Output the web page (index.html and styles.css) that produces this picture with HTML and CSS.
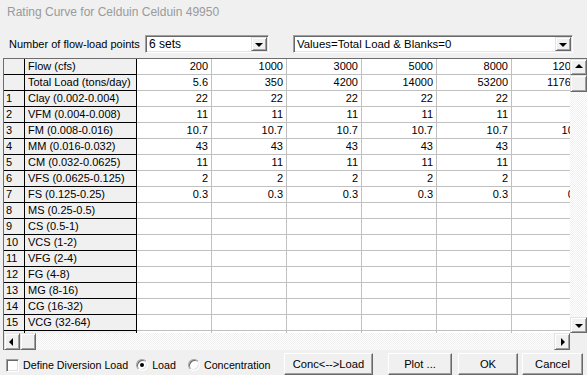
FILE: index.html
```html
<!DOCTYPE html>
<html lang="en">
<head>
    <meta charset="UTF-8">
    <title>Rating Curve</title>
    <link rel="stylesheet" href="styles.css">
</head>
<body>
    <div class="title">Rating Curve for Celduin Celduin 49950</div>

    <div class="toolbar">
        <span class="points-label">Number of flow-load points</span>
        <div class="combo combo-sets">
            <span class="combo-text">6 sets</span>
            <span class="combo-btn"><i class="arrow-down"></i></span>
        </div>
        <div class="combo combo-values">
            <span class="combo-text">Values=Total Load &amp; Blanks=0</span>
            <span class="combo-btn"><i class="arrow-down"></i></span>
        </div>
    </div>

    <div class="grid">
        <div class="grid-main">
            <div class="table-wrap">
                <div class="table" id="table"></div>
            </div>
            <div class="vscroll">
                <span class="sb-btn"><i class="arrow-up"></i></span>
                <span class="sb-thumb"></span>
                <span class="sb-track"></span>
                <span class="sb-btn"><i class="arrow-down"></i></span>
            </div>
        </div>
        <div class="hscroll">
            <span class="sb-btn"><i class="arrow-left"></i></span>
            <span class="sb-thumb"></span>
            <span class="sb-track"></span>
            <span class="sb-btn"><i class="arrow-right"></i></span>
            <span class="sb-corner"></span>
        </div>
    </div>

    <div class="footer">
        <div class="options">
            <span class="check"></span>
            <span class="opt-label">Define Diversion Load</span>
            <span class="radio radio-load on"></span>
            <span class="opt-label">Load</span>
            <span class="radio radio-conc"></span>
            <span class="opt-label">Concentration</span>
        </div>
        <button class="btn btn-conc">Conc&lt;--&gt;Load</button>
        <button class="btn btn-plot">Plot ...</button>
        <button class="btn btn-ok">OK</button>
        <button class="btn btn-cancel">Cancel</button>
    </div>

    <script>
        var rows = [
            ['', 'Flow (cfs)', '200', '1000', '3000', '5000', '8000', '12000'],
            ['', 'Total Load (tons/day)', '5.6', '350', '4200', '14000', '53200', '117600'],
            ['1', 'Clay (0.002-0.004)', '22', '22', '22', '22', '22', '22'],
            ['2', 'VFM (0.004-0.008)', '11', '11', '11', '11', '11', '11'],
            ['3', 'FM (0.008-0.016)', '10.7', '10.7', '10.7', '10.7', '10.7', '10.7'],
            ['4', 'MM (0.016-0.032)', '43', '43', '43', '43', '43', '43'],
            ['5', 'CM (0.032-0.0625)', '11', '11', '11', '11', '11', '11'],
            ['6', 'VFS (0.0625-0.125)', '2', '2', '2', '2', '2', '2'],
            ['7', 'FS (0.125-0.25)', '0.3', '0.3', '0.3', '0.3', '0.3', '0.3'],
            ['8', 'MS (0.25-0.5)'],
            ['9', 'CS (0.5-1)'],
            ['10', 'VCS (1-2)'],
            ['11', 'VFG (2-4)'],
            ['12', 'FG (4-8)'],
            ['13', 'MG (8-16)'],
            ['14', 'CG (16-32)'],
            ['15', 'VCG (32-64)'],
            ['16', 'BLD (64-128)']
        ];

        var table = document.getElementById('table');
        rows.forEach(function(row) {
            for (var i = 0; i < 8; i++) {
                var cell = document.createElement('div');
                cell.className = i < 2 ? 'cell fixed' : 'cell data';
                if (i === 0) cell.className += ' num';
                cell.textContent = row[i] || '';
                table.appendChild(cell);
            }
        });
    </script>
</body>
</html>
```

FILE: styles.css
```css
body {
    margin: 0;
    width: 587px;
    height: 375px;
    overflow: hidden;
    background: #f0f0f0;
    font-family: "Liberation Sans", Arial, sans-serif;
    font-size: 11px;
    color: #000;
}

.title {
    height: 30px;
    padding: 5px 0 0 7px;
    box-sizing: border-box;
    font-size: 12px;
    line-height: 15px;
    color: #9a9a9a;
}

.toolbar {
    display: flex;
    align-items: center;
    height: 18px;
    margin-top: 5px;
    padding-left: 9px;
}
.points-label {
    width: 136px;
}

/* sunken combo boxes */
.combo {
    display: flex;
    align-items: center;
    height: 18px;
    box-sizing: border-box;
    background: #fff;
    border: 1px solid;
    border-color: #a0a0a0 #fff #fff #a0a0a0;
    box-shadow: inset 1px 1px #696969, inset -1px -1px #e3e3e3;
}
.combo-sets {
    width: 124px;
}
.combo-values {
    width: 280px;
    margin-left: 24px;
}
.combo-text {
    flex: 1;
    padding-left: 3px;
    font-size: 12px;
}
.combo-values .combo-text {
    font-size: 11.4px;
}
.combo-btn {
    display: flex;
    align-items: center;
    justify-content: center;
    width: 16px;
    height: 14px;
    margin-right: 1px;
    box-sizing: border-box;
    background: #f0f0f0;
    border: 1px solid;
    border-color: #e3e3e3 #696969 #696969 #e3e3e3;
    box-shadow: inset 1px 1px #fff, inset -1px -1px #a0a0a0;
}

.arrow-down, .arrow-up, .arrow-left, .arrow-right {
    display: block;
    width: 0;
    height: 0;
    border: 4px solid transparent;
}
.arrow-down {
    border-top: 4px solid #000;
    border-bottom-width: 0;
    margin-top: 2px;
}
.arrow-up {
    border-bottom: 4px solid #000;
    border-top-width: 0;
    margin-bottom: 2px;
}
.arrow-left {
    border-right: 4px solid #000;
    border-left-width: 0;
    margin-right: 2px;
}
.arrow-right {
    border-left: 4px solid #000;
    border-right-width: 0;
    margin-left: 2px;
}

/* data grid */
.grid {
    margin: 5px 0 0 3px;
    border-top: 1px solid #6d6d6d;
    border-left: 1px solid #6d6d6d;
    width: 600px;
}
.grid-main {
    display: flex;
}
.table-wrap {
    width: 566px;
    height: 274px;
    overflow: hidden;
    background: #fff;
}
.table {
    display: grid;
    grid-template-columns: 21px 112px repeat(6, 75px);
    grid-auto-rows: 16px;
}
.cell {
    box-sizing: border-box;
    line-height: 15px;
    white-space: nowrap;
    overflow: hidden;
}
.fixed {
    background: #f0f0f0;
    border-right: 1px solid #000;
    border-bottom: 1px solid #000;
    padding-left: 3px;
}
.num {
    padding-left: 2px;
}
.data {
    background: #fff;
    border-right: 1px solid #c0c0c0;
    border-bottom: 1px solid #c0c0c0;
    text-align: right;
    padding-right: 3px;
}

/* scrollbars */
.sb-btn {
    display: flex;
    align-items: center;
    justify-content: center;
    box-sizing: border-box;
    width: 17px;
    height: 17px;
    background: #f0f0f0;
    border: 1px solid;
    border-color: #e3e3e3 #696969 #696969 #e3e3e3;
    box-shadow: inset 1px 1px #fff, inset -1px -1px #a0a0a0;
}
.sb-thumb {
    box-sizing: border-box;
    width: 17px;
    height: 17px;
    background: #f0f0f0;
    border: 1px solid;
    border-color: #e3e3e3 #696969 #696969 #e3e3e3;
    box-shadow: inset 1px 1px #fff, inset -1px -1px #a0a0a0;
}
.sb-track {
    flex: 1;
    background: repeating-conic-gradient(#f0f0f0 0 25%, #fff 0 50%) 0 0 / 2px 2px;
}
.vscroll {
    display: flex;
    flex-direction: column;
    width: 17px;
    height: 274px;
}
.vscroll .sb-btn {
    height: 16px;
}
.hscroll {
    display: flex;
    height: 17px;
    width: 583px;
}
.hscroll .sb-btn, .hscroll .sb-thumb {
    width: 16px;
}
.sb-corner {
    width: 17px;
    background: #f0f0f0;
}

/* bottom controls */
.footer {
    display: flex;
    align-items: center;
    height: 25px;
    padding-left: 6px;
    white-space: nowrap;
}
.footer > * {
    flex-shrink: 0;
}
.options {
    display: flex;
    align-items: center;
    width: 278px;
    margin-top: 5px;
}
.check {
    width: 13px;
    height: 13px;
    box-sizing: border-box;
    background: #fff;
    border: 1px solid;
    border-color: #a0a0a0 #fff #fff #a0a0a0;
    box-shadow: inset 1px 1px #696969, inset -1px -1px #e3e3e3;
}
.opt-label {
    margin-left: 4px;
    font-size: 10.7px;
}
.radio {
    position: relative;
    width: 12px;
    height: 12px;
    box-sizing: border-box;
    border-radius: 50%;
    background: #fff;
    border: 1px solid;
    border-color: #a0a0a0 #fff #fff #a0a0a0;
    box-shadow: inset 1px 1px #696969, inset -1px -1px #e3e3e3;
}
.radio.on::after {
    content: "";
    position: absolute;
    left: 3px;
    top: 3px;
    width: 4px;
    height: 4px;
    border-radius: 50%;
    background: #000;
}
.radio-load {
    margin-left: 8px;
}
.radio-conc {
    margin-left: 12px;
}
.btn {
    height: 22px;
    margin-top: 3px;
    padding: 0;
    box-sizing: border-box;
    font-family: "Liberation Sans", Arial, sans-serif;
    font-size: 11.2px;
    color: #000;
    background: #f0f0f0;
    border: 1px solid;
    border-color: #fff #696969 #696969 #fff;
    box-shadow: inset -1px -1px #a0a0a0;
}
.btn-conc {
    width: 89px;
}
.btn-plot {
    width: 64px;
    margin-left: 15px;
}
.btn-ok {
    width: 60px;
    margin-left: 6px;
}
.btn-cancel {
    width: 61px;
    margin-left: 4px;
}
```
